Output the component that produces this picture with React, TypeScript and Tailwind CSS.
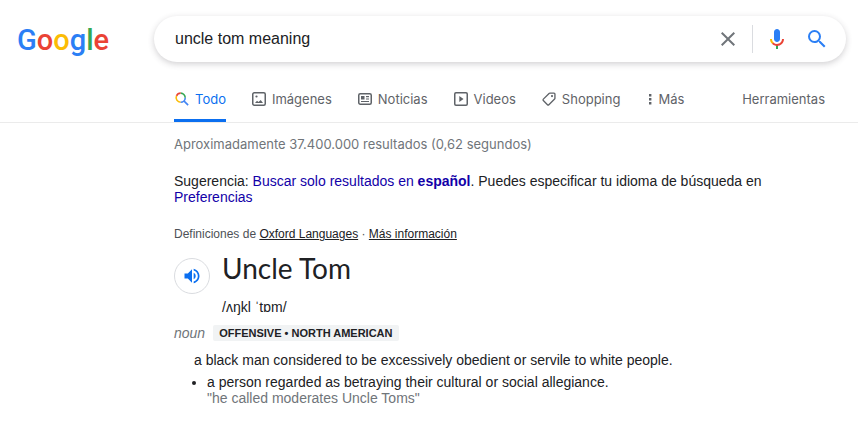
import React from 'react';
import { clsx } from 'clsx';

const LOGO_LETTERS = [
  { letter: 'G', color: 'text-[#2b7ff5]' },
  { letter: 'o', color: 'text-[#ea4335]' },
  { letter: 'o', color: 'text-[#fbbc05]' },
  { letter: 'g', color: 'text-[#2b7ff5]' },
  { letter: 'l', color: 'text-[#34a853]' },
  { letter: 'e', color: 'text-[#ea4335]' },
];

const Logo: React.FC = () => (
  <a
    href="#"
    aria-label="Google"
    className="w-[154px] shrink-0 pl-[17px] font-['Roboto',sans-serif] text-[29px] leading-[48px] font-medium"
  >
    {LOGO_LETTERS.map(({ letter, color }, i) => (
      <span key={i} className={color}>
        {letter}
      </span>
    ))}
  </a>
);

const SearchIcon: React.FC = () => (
  <svg viewBox="0 0 24 24" className="h-6 w-6" fill="#2b7ff5">
    <path d="M15.5 14h-.79l-.28-.27A6.47 6.47 0 0 0 16 9.5 6.5 6.5 0 1 0 9.5 16c1.61 0 3.09-.59 4.23-1.57l.27.28v.79l5 4.99L20.49 19l-4.99-5zm-6 0C7.01 14 5 11.99 5 9.5S7.01 5 9.5 5 14 7.01 14 9.5 11.99 14 9.5 14z" />
  </svg>
);

const MicIcon: React.FC = () => (
  <svg viewBox="0 0 24 24" className="h-6 w-6">
    <path
      fill="#2b7ff5"
      d="m12 15c1.66 0 3-1.31 3-2.97v-7.02c0-1.66-1.34-3.01-3-3.01s-3 1.34-3 3.01v7.02c0 1.66 1.34 2.97 3 2.97z"
    />
    <path fill="#34a853" d="m11 18.08h2v3.92h-2z" />
    <path
      fill="#fbbc05"
      d="m7.05 16.87c-1.27-1.33-2.05-2.83-2.05-4.87h2c0 1.45 0.56 2.42 1.47 3.38v0.32l-1.15 1.18z"
    />
    <path
      fill="#ea4335"
      d="m12 16.93a4.97 5.25 0 0 1 -3.54 -1.55l-1.41 1.49c1.26 1.34 3.02 2.13 4.95 2.13 3.87 0 6.99-2.92 6.99-7h-1.99c0 2.92-2.24 4.93-5 4.93z"
    />
  </svg>
);

const ClearIcon: React.FC = () => (
  <svg viewBox="0 0 24 24" className="h-6 w-6" fill="#70757a">
    <path d="M19 6.41L17.59 5 12 10.59 6.41 5 5 6.41 10.59 12 5 17.59 6.41 19 12 13.41 17.59 19 19 17.59 13.41 12z" />
  </svg>
);

const AllIcon: React.FC = () => (
  <svg viewBox="0 0 24 24" className="h-4 w-4" fill="none" strokeWidth="2.4">
    <path stroke="#34a853" d="M10 3.2a6.8 6.8 0 0 1 6.8 6.8" />
    <path stroke="#ea4335" d="M3.8 7.2A6.8 6.8 0 0 1 10 3.2" />
    <path stroke="#fbbc05" d="M10 16.8A6.8 6.8 0 0 1 3.8 7.2" />
    <path stroke="#4285f4" d="M16.8 10A6.8 6.8 0 0 1 10 16.8M14.8 14.8l6.4 6.4" />
  </svg>
);

const ImagesIcon: React.FC = () => (
  <svg viewBox="0 0 16 16" className="h-4 w-4" fill="#5f6368">
    <rect x="1.75" y="1.75" width="12.5" height="12.5" rx="1.5" fill="none" stroke="#5f6368" strokeWidth="1.5" />
    <path d="M4 12l2-2.2 1.5 1.2 2.2-2L12 12z" />
    <circle cx="5.5" cy="5.5" r="1.1" />
  </svg>
);

const NewsIcon: React.FC = () => (
  <svg viewBox="0 0 16 16" className="h-4 w-4" fill="#5f6368">
    <rect x="1.75" y="2.75" width="12.5" height="10.5" rx="1.5" fill="none" stroke="#5f6368" strokeWidth="1.5" />
    <path d="M4 5h3.5v3.5H4zM9 5h3v1.2H9zM9 7.4h3v1.2H9zM4 9.9h8v1.2H4z" />
  </svg>
);

const VideosIcon: React.FC = () => (
  <svg viewBox="0 0 16 16" className="h-4 w-4" fill="#5f6368">
    <rect x="1.75" y="1.75" width="12.5" height="12.5" rx="1.2" fill="none" stroke="#5f6368" strokeWidth="1.5" />
    <path d="M6.3 5v6l4.2-3z" />
  </svg>
);

const ShoppingIcon: React.FC = () => (
  <svg viewBox="0 0 24 24" className="h-4 w-4" fill="#5f6368">
    <path
      d="M13.2 3.2h6.3c.8 0 1.4.6 1.4 1.4v6.2c0 .4-.2.8-.5 1.1l-8.6 8.6c-.6.6-1.5.6-2.1 0l-6.2-6.2c-.6-.6-.6-1.5 0-2.1l8.6-8.5c.3-.3.7-.5 1.1-.5z"
      fill="none"
      stroke="#5f6368"
      strokeWidth="2"
    />
    <circle cx="16.5" cy="7.6" r="1.6" />
  </svg>
);

const MoreIcon: React.FC = () => (
  <svg viewBox="0 0 8 16" className="h-4 w-2" fill="#5f6368">
    <path d="M4 3h2.4v2.4H4zM4 7h2.4v2.4H4zM4 11h2.4v2.4H4z" />
  </svg>
);

const SpeakerIcon: React.FC = () => (
  <svg viewBox="0 0 24 24" className="h-5 w-5" fill="#0b6ff0">
    <path d="M3 9v6h4l5 5V4L7 9H3zm13.5 3A4.5 4.5 0 0 0 14 7.97v8.05A4.47 4.47 0 0 0 16.5 12zM14 3.23v2.06c2.89.86 5 3.54 5 6.71s-2.11 5.85-5 6.71v2.06c4.01-.91 7-4.49 7-8.77s-2.99-7.86-7-8.77z" />
  </svg>
);

const TABS = [
  { label: 'Todo', Icon: AllIcon, active: true },
  { label: 'Imágenes', Icon: ImagesIcon },
  { label: 'Noticias', Icon: NewsIcon },
  { label: 'Videos', Icon: VideosIcon },
  { label: 'Shopping', Icon: ShoppingIcon },
];

const SearchBar: React.FC = () => (
  <form
    role="search"
    onSubmit={(e) => e.preventDefault()}
    className="mr-3 flex h-[46px] min-w-0 flex-1 items-center rounded-full bg-white pr-[17px] pl-[21px] shadow-[0_2px_6px_rgba(64,60,67,0.24)]"
  >
    <input
      type="text"
      aria-label="Buscar"
      defaultValue="uncle tom meaning"
      className="min-w-0 flex-1 text-base text-[#202124] outline-none"
    />
    <button type="button" aria-label="Borrar" className="mr-3">
      <ClearIcon />
    </button>
    <span className="mr-3 h-7 w-px bg-[#dadce0]" />
    <button type="button" aria-label="Buscar por voz" className="mr-4">
      <MicIcon />
    </button>
    <button type="submit" aria-label="Buscar con Google">
      <SearchIcon />
    </button>
  </form>
);

const Tabs: React.FC = () => (
  <nav className="mt-4 flex border-b border-[#ebebeb] pr-[33px] pl-[174px] font-['Inter',sans-serif] text-[13px] leading-5 text-[#5f6368]">
    <div className="flex gap-[25px]">
      {TABS.map(({ label, Icon, active }) => (
        <a
          key={label}
          href="#"
          className={clsx(
            'flex h-11 items-center gap-[5px] border-b-3',
            active ? 'border-[#0b6ff0] text-[#0b6ff0]' : 'border-transparent'
          )}
        >
          <Icon />
          {label}
        </a>
      ))}
      <button type="button" className="flex h-11 items-center gap-[5px] border-b-3 border-transparent">
        <MoreIcon />
        Más
      </button>
    </div>
    <button type="button" className="ml-auto h-11 border-b-3 border-transparent">
      Herramientas
    </button>
  </nav>
);

const Definition: React.FC = () => (
  <section className="text-sm leading-4">
    <p className="mt-[21px] text-xs leading-4 text-[#4d5156]">
      Definiciones de{' '}
      <a href="#" className="text-[#202124] underline">
        Oxford Languages
      </a>{' '}
      ·{' '}
      <a href="#" className="text-[#202124] underline">
        Más información
      </a>
    </p>

    <div className="mt-3 flex gap-3">
      <button
        type="button"
        aria-label="Escuchar pronunciación"
        className="mt-1 flex h-9 w-9 items-center justify-center rounded-full border border-[#dadce0]"
      >
        <SpeakerIcon />
      </button>
      <div>
        <h2 className="font-['Lato',sans-serif] text-[28px] leading-7">Uncle Tom</h2>
        <p className="mt-[17px]">/ʌŋkl ˈtɒm/</p>
      </div>
    </div>

    <div className="mt-[10px] flex items-center gap-2">
      <em className="text-[#70757a]">noun</em>
      <span className="rounded-xs bg-[#f1f3f4] px-[6px] text-[11px] font-bold">
        OFFENSIVE • NORTH AMERICAN
      </span>
    </div>

    <p className="mt-[11px] pl-5">a black man considered to be excessively obedient or servile to white people.</p>
    <ul className="mt-[6px] list-disc pl-[33px]">
      <li>
        a person regarded as betraying their cultural or social allegiance.
        <p className="text-[#70757a]">"he called moderates Uncle Toms"</p>
      </li>
    </ul>
  </section>
);

export default function App() {
  return (
    <div className="min-h-screen bg-white font-['Liberation_Sans',Arial,sans-serif] text-[#202124]">
      <header className="pt-4">
        <div className="flex h-[46px]">
          <Logo />
          <SearchBar />
        </div>
        <Tabs />
      </header>
      <main className="max-w-[774px] pl-[174px]">
        <p className="mt-[11px] font-['Inter',sans-serif] text-[13px] leading-5 text-[#70757a]">
          Aproximadamente 37.400.000 resultados (0,62 segundos)
        </p>
        <p className="mt-[19px] text-sm leading-4">
          Sugerencia:{' '}
          <a href="#" className="text-[#1200a8]">
            Buscar solo resultados en <b>español</b>
          </a>
          . Puedes especificar tu idioma de búsqueda en{' '}
          <a href="#" className="text-[#1200a8]">
            Preferencias
          </a>
        </p>
        <Definition />
      </main>
    </div>
  );
}
